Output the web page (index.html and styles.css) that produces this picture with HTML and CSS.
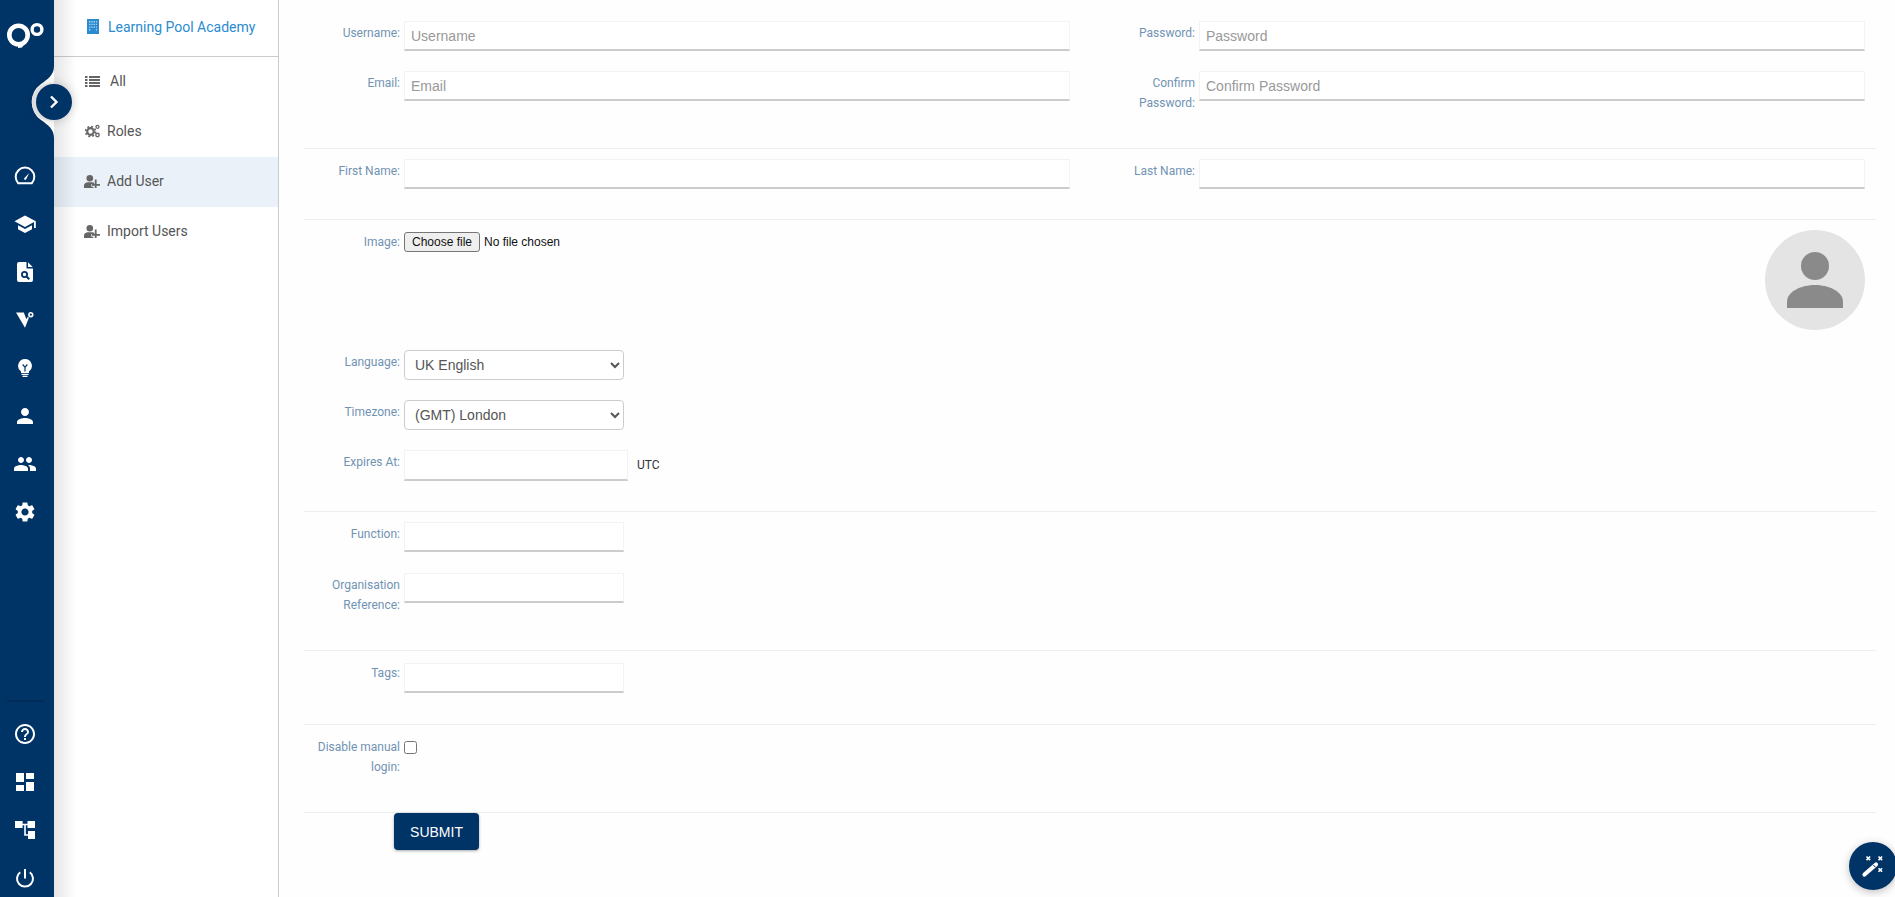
FILE: index.html
```html
<!DOCTYPE html>
<html lang="en">
<head>
<meta charset="utf-8">
<title>Add User</title>
<link rel="stylesheet" href="styles.css">
</head>
<body>
<div class="app">
  <aside class="rail">
    <div class="rail-logo">
      <svg class="logo" viewBox="0 0 38 27" width="38" height="27"><circle cx="11.500" cy="13" r="9.200" fill="none" stroke="#fff" stroke-width="4.600"/><path d="M11 22h6.500l-2.500 3.500c-1.200.3-2.500.5-4 .5z" fill="#fff"/><circle cx="30" cy="7.500" r="4.900" fill="#003366" stroke="#fff" stroke-width="3.400"/></svg>
    </div>
    <div class="rail-group">
      <a class="rail-btn"><svg viewBox="0 0 24 24" width="24" height="24"><path d="M5.200 19.200a9.300 9.300 0 1 1 13.600 0z" fill="none" stroke="#fff" stroke-width="2" stroke-linejoin="round"/><path d="M11.200 14.200l5-5.200-3 6.200a1.100 1.100 0 0 1-2-1z" fill="#fff"/></svg></a>
      <a class="rail-btn"><svg viewBox="0 0 24 24" width="24" height="24"><path d="M5 13.200v4L12 21l7-3.800v-4L12 17zM12 3.500L1.500 9.200 12 15l9-4.900V16h1.800V9.200z" fill="#fff"/></svg></a>
      <a class="rail-btn"><svg viewBox="0 0 24 24" width="24" height="24"><path d="M6 2h7.500v6.500H20V20a2 2 0 0 1-2 2H6a2 2 0 0 1-2-2V4a2 2 0 0 1 2-2zM15 2.300L19.700 7H15z" fill="#fff"/><circle cx="11.500" cy="14.500" r="2.600" fill="none" stroke="#003366" stroke-width="1.800"/><path d="M13.500 16.500l2.800 2.800" stroke="#003366" stroke-width="2"/></svg></a>
      <a class="rail-btn"><svg viewBox="0 0 17 15" width="18" height="16"><path d="M0 .5h7.400L9.800 6.800 11.300 4.300 12.200 5.300 8.500 14.800z" fill="#fff"/><circle cx="14" cy="2.500" r="1.800" fill="none" stroke="#fff" stroke-width="1.500"/></svg></a>
      <a class="rail-btn"><svg viewBox="0 0 14 18" width="14" height="18"><path d="M7 0a6.900 6.900 0 0 0-4 12.500V14h8v-1.500A6.900 6.900 0 0 0 7 0z" fill="#fff"/><path d="M4.700 5.500L7 8.300l2.300-2.800M7 8.300v4.200" fill="none" stroke="#003366" stroke-width="1.200"/><rect x="3.500" y="14.800" width="7" height="1.200" fill="#fff"/><rect x="4.500" y="16.700" width="5" height="1.300" fill="#fff"/></svg></a>
      <a class="rail-btn"><svg viewBox="0 0 24 24" width="24" height="24"><path d="M12 12c2.210 0 4-1.790 4-4s-1.790-4-4-4-4 1.790-4 4 1.790 4 4 4zm0 2c-2.670 0-8 1.340-8 4v2h16v-2c0-2.660-5.330-4-8-4z" fill="#fff"/></svg></a>
      <a class="rail-btn"><svg viewBox="0 0 24 24" width="24" height="24"><path d="M16 11c1.660 0 2.990-1.340 2.990-3S17.660 5 16 5c-1.660 0-3 1.340-3 3s1.340 3 3 3zm-8 0c1.660 0 2.990-1.340 2.990-3S9.660 5 8 5C6.340 5 5 6.340 5 8s1.340 3 3 3zm0 2c-2.330 0-7 1.170-7 3.500V19h14v-2.500c0-2.330-4.670-3.500-7-3.500zm8 0c-.29 0-.62.020-.97.050 1.160.840 1.970 1.970 1.970 3.450V19h6v-2.500c0-2.330-4.670-3.500-7-3.500z" fill="#fff"/></svg></a>
      <a class="rail-btn"><svg viewBox="0 0 24 24" width="24" height="24"><path d="M19.140 12.940c.04-.3.060-.61.060-.94 0-.32-.02-.64-.07-.94l2.030-1.580c.18-.14.23-.41.120-.61l-1.920-3.320c-.12-.22-.37-.29-.59-.22l-2.390.960c-.5-.38-1.030-.7-1.620-.94l-.36-2.540c-.04-.24-.24-.41-.48-.41h-3.840c-.24 0-.43.170-.47.410l-.36 2.540c-.59.240-1.130.570-1.620.940l-2.390-.96c-.22-.08-.47 0-.59.220L2.740 8.870c-.12.210-.08.470.120.610l2.030 1.580c-.05.3-.09.630-.09.940s.020.640.070.940l-2.030 1.580c-.18.140-.23.410-.12.610l1.920 3.320c.12.220.37.290.59.220l2.390-.96c.5.380 1.030.7 1.620.940l.36 2.540c.05.240.24.410.48.410h3.840c.24 0 .44-.17.470-.41l.36-2.540c.59-.24 1.130-.56 1.620-.94l2.390.960c.22.080.47 0 .59-.22l1.920-3.320c.12-.22.070-.47-.12-.61l-2.010-1.580zM12 15.600c-1.980 0-3.600-1.620-3.600-3.600s1.620-3.600 3.600-3.600 3.600 1.620 3.600 3.600-1.620 3.600-3.600 3.600z" fill="#fff"/></svg></a>
    </div>
    <div class="rail-sep"></div>
    <div class="rail-group">
      <a class="rail-btn"><svg viewBox="0 0 24 24" width="24" height="24"><path d="M11 18h2v-2h-2v2zm1-16C6.480 2 2 6.480 2 12s4.480 10 10 10 10-4.480 10-10S17.520 2 12 2zm0 18c-4.410 0-8-3.590-8-8s3.590-8 8-8 8 3.590 8 8-3.590 8-8 8zm0-14c-2.210 0-4 1.790-4 4h2c0-1.100.9-2 2-2s2 .9 2 2c0 2-3 1.750-3 5h2c0-2.250 3-2.500 3-5 0-2.210-1.790-4-4-4z" fill="#fff"/></svg></a>
      <a class="rail-btn"><svg viewBox="0 0 24 24" width="24" height="24"><path d="M3 12h8V3H3v9zm0 9h8v-6H3v6zm10 0h8v-9h-8v9zm0-18v6h8V3h-8z" fill="#fff"/></svg></a>
      <a class="rail-btn"><svg viewBox="0 0 24 24" width="24" height="24"><path d="M2 3h7.600v7H2zM14.500 3H22v7h-7.500zM15 13h7v8h-7z" fill="#fff"/><path d="M9 6.500h6M12 6.500V17h3.500" fill="none" stroke="#fff" stroke-width="1.600"/></svg></a>
      <a class="rail-btn"><svg viewBox="0 0 24 24" width="24" height="24"><path d="M12 3v9.500" stroke="#fff" stroke-width="2" fill="none"/><path d="M7.200 6.200a8 8 0 1 0 9.600 0" stroke="#fff" stroke-width="2" fill="none"/></svg></a>
    </div>
    <svg class="rail-notch" viewBox="0 0 30 72" width="30" height="72"><path d="M30 0C30 9 24 13 17 18A22 22 0 0 0 17 54C24 59 30 63 30 72Z" fill="#fff"/></svg>
    <button class="rail-toggle" type="button" aria-label="Expand">
      <svg viewBox="0 0 12 14" width="12" height="14"><path d="M3 1.500L8.500 7 3 12.500" fill="none" stroke="#fff" stroke-width="2.400"/></svg>
    </button>
  </aside>

  <nav class="subnav">
    <div class="subnav-head">
      <svg viewBox="0 0 12 15" width="12" height="15"><path d="M0 0h12v15H0z" fill="#2a8bd0"/><path d="M2 2h1.400v1.400H2zM4.300 2h1.400v1.400H4.300zM6.600 2H8v1.400H6.600zM8.900 2h1.100v1.400H8.900zM2 4.700h1.400v1.400H2zM4.300 4.700h1.400v1.400H4.300zM6.600 4.700H8v1.400H6.600zM8.900 4.700h1.100v1.400H8.900zM2 7.400h1.400v1.400H2zM4.300 7.400h1.400v1.400H4.300zM6.600 7.400H8v1.400H6.600zM8.900 7.400h1.100v1.400H8.900zM2 10.100h1.400v1.400H2zM8.900 10.100h1.100v1.400H8.900z" fill="#a9d3f0"/></svg>
      <span>Learning Pool Academy</span>
    </div>
    <a class="subnav-item">
      <svg class="icon-nudge" viewBox="0 0 15 11" width="15" height="11"><path d="M0 0h2.500v2H0zM4 0h11v2H4zM0 3h2.500v2H0zM4 3h11v2H4zM0 6h2.500v2H0zM4 6h11v2H4zM0 9h2.500v2H0zM4 9h11v2H4z" fill="#666"/></svg>
      <span class="item-wide">All</span>
    </a>
    <a class="subnav-item">
      <svg class="icon-nudge" viewBox="0 0 15 14" width="15" height="14"><circle cx="5.500" cy="7.500" r="3.300" fill="none" stroke="#666" stroke-width="2.200"/><circle cx="5.500" cy="7.500" r="5" fill="none" stroke="#666" stroke-width="1.600" stroke-dasharray="2 1.930"/><circle cx="12.500" cy="2.800" r="1.500" fill="none" stroke="#666" stroke-width="1.300"/><circle cx="12.500" cy="11" r="1.700" fill="none" stroke="#666" stroke-width="1.400"/></svg>
      <span>Roles</span>
    </a>
    <a class="subnav-item is-active">
      <svg viewBox="0 0 16 13" width="16" height="13"><circle cx="5.800" cy="3.300" r="3.300" fill="#666"/><path d="M0 13v-2.600C0 8.500 1.800 7.200 3.800 7.200h4.400c1 0 1.700.3 2 .6V9H7.400v2.800h2V13z" fill="#666"/><path d="M10.800 4.500h1.800V9H16v1.800h-3.400V13h-1.800v-2.200H8V9h2.800z" fill="#666"/></svg>
      <span>Add User</span>
    </a>
    <a class="subnav-item">
      <svg viewBox="0 0 16 13" width="16" height="13"><circle cx="5.800" cy="3.300" r="3.300" fill="#666"/><path d="M0 13v-2.600C0 8.500 1.800 7.200 3.800 7.200h4.400c1 0 1.700.3 2 .6V9H7.400v2.800h2V13z" fill="#666"/><path d="M10.800 4.500h1.800V9H16v1.800h-3.400V13h-1.800v-2.200H8V9h2.800z" fill="#666"/></svg>
      <span>Import Users</span>
    </a>
  </nav>

  <main class="main">
    <form class="form">
      <section class="sec sec-account">
        <div class="two">
          <div class="field"><label class="lbl">Username:</label><input class="inp" type="text" placeholder="Username"></div>
          <div class="field"><label class="lbl">Password:</label><input class="inp" type="password" placeholder="Password"></div>
          <div class="field"><label class="lbl">Email:</label><input class="inp" type="text" placeholder="Email"></div>
          <div class="field"><label class="lbl">Confirm Password:</label><input class="inp" type="password" placeholder="Confirm Password"></div>
        </div>
      </section>
      <section class="sec sec-name">
        <div class="two">
          <div class="field"><label class="lbl">First Name:</label><input class="inp" type="text"></div>
          <div class="field"><label class="lbl">Last Name:</label><input class="inp" type="text"></div>
        </div>
      </section>
      <section class="sec sec-prefs">
        <div class="field field-image">
          <label class="lbl">Image:</label>
          <div class="file">
            <button class="file-btn" type="button">Choose file</button>
            <span class="file-name">No file chosen</span>
          </div>
          <div class="avatar">
            <svg viewBox="0 0 100 100" width="100" height="100"><circle cx="50" cy="36" r="14" fill="#8a8a8a"/><path d="M22 78v-6c0-11 15-17 28-17s28 6 28 17v6z" fill="#8a8a8a"/></svg>
          </div>
        </div>
        <div class="field"><label class="lbl">Language:</label>
          <select class="sel"><option>UK English</option></select>
        </div>
        <div class="field"><label class="lbl">Timezone:</label>
          <select class="sel"><option>(GMT) London</option></select>
        </div>
        <div class="field"><label class="lbl">Expires At:</label>
          <input class="inp inp-date" type="text"><span class="utc">UTC</span>
        </div>
      </section>
      <section class="sec sec-org">
        <div class="field"><label class="lbl">Function:</label><input class="inp inp-short" type="text"></div>
        <div class="field"><label class="lbl">Organisation Reference:</label><input class="inp inp-short" type="text"></div>
      </section>
      <section class="sec sec-tags">
        <div class="field"><label class="lbl">Tags:</label><input class="inp inp-short inp-tags" type="text"></div>
      </section>
      <section class="sec sec-login">
        <div class="field"><label class="lbl">Disable manual login:</label><input class="chk" type="checkbox"></div>
      </section>
      <button class="submit" type="button">SUBMIT</button>
    </form>
  </main>
</div>
<button class="fab" type="button" aria-label="Magic">
  <svg viewBox="0 0 24 24" width="24" height="24"><path d="M3.500 20.500L15 10.500" fill="none" stroke="#fff" stroke-width="4.200" stroke-linecap="round"/><path d="M12.200 10.800l2.400 2.600" stroke="#003366" stroke-width="1"/><path d="M5.500 2.500l3.600 3.600m0-3.600L5.500 6.100M17.500 2.500l3.600 3.600m0-3.600l-3.600 3.600M17.500 14.200l3.600 3.600m0-3.600l-3.600 3.600" stroke="#fff" stroke-width="1.600"/></svg>
</button>
</body>
</html>
```
FILE: styles.css
```css
* { box-sizing: border-box; }
html, body { margin: 0; height: 100%; overflow: hidden; background: #fefefe; }
body { font-family: Roboto, "Liberation Sans", sans-serif; }
.app { display: flex; height: 897px; }

.rail { position: relative; z-index: 3; flex: 0 0 54px; width: 54px; height: 897px; background: #003366; display: flex; flex-direction: column; }
.rail-logo { height: 152px; flex: none; padding: 22px 0 0 7px; }
.logo { display: block; }
.rail-group { flex: none; }
.rail-btn { display: flex; align-items: center; justify-content: center; height: 48px; width: 50px; }
.rail-sep { flex: none; height: 2px; width: 37px; margin: 164px 0 8px 7px; background: #002a57; }
.rail-notch { position: absolute; left: 24px; top: 66px; }
.rail-toggle { position: absolute; left: 36px; top: 84px; width: 36px; height: 36px; padding: 0; border: 0; border-radius: 50%; background: #003366; display: flex; align-items: center; justify-content: center; box-shadow: -3px 0 0 1px #dedede, 0 0 9px 2px rgba(0,0,0,.14); }

.subnav { position: relative; z-index: 1; flex: 0 0 225px; width: 225px; height: 897px; background: #fff; border-right: 1px solid #ccc; color: #555; font-size: 14px; }
.subnav::before { content: ""; position: absolute; left: 0; top: 0; bottom: 0; width: 22px; background: linear-gradient(to right, rgba(0,0,0,.1), rgba(0,0,0,0)); pointer-events: none; z-index: 2; }
.subnav-head { height: 57px; padding: 0 0 3px 33px; border-bottom: 1px solid #ccc; display: flex; align-items: center; gap: 9px; color: #2a8bd0; }
.subnav-item { height: 50px; padding: 0 0 2px 30px; display: flex; align-items: center; gap: 7px; color: #555; }
.subnav-item svg { flex: none; }
.subnav-item .icon-nudge { margin-left: 1px; }
.item-wide { margin-left: 3px; }
.is-active { background: #eaf1f9; }

.main { flex: 1; min-width: 0; height: 897px; padding: 0 19px 0 25px; }
.sec { border-bottom: 1px solid #eee; padding-top: 10px; }
.sec-account { padding-top: 21px; padding-bottom: 35px; height: 149px; }
.sec-name { height: 71px; }
.sec-prefs { height: 292px; display: flex; flex-direction: column; gap: 20px; }
.sec-org { height: 139px; display: flex; flex-direction: column; gap: 21px; }
.sec-tags { height: 74px; }
.sec-login { height: 88px; }

.two { display: grid; grid-template-columns: 766px 766px; column-gap: 29px; row-gap: 20px; }
.field { display: flex; align-items: flex-start; }
.lbl { flex: 0 0 96px; width: 96px; margin-right: 4px; padding-top: 2px; text-align: right; font-size: 12px; line-height: 20px; color: #7193b3; }
.inp { flex: 1; min-width: 0; height: 30px; padding: 0 6px; background: #fff; border: 1px solid #f3f3f3; border-bottom: 2px solid #ccc; border-radius: 0; font: 14px "Liberation Sans", Arial, sans-serif; color: #555; outline: none; }
.inp::placeholder { color: #999; opacity: 1; }
.inp-short { flex: 0 0 220px; width: 220px; }
.inp-date { flex: 0 0 224px; width: 224px; height: 31px; }
.inp-tags { margin-top: 2px; }
.utc { margin: 5px 0 0 9px; font-size: 12px; line-height: 20px; color: #333; }

.field-image { height: 100px; }
.file { margin-top: 2px; display: flex; align-items: center; gap: 4px; font: 12px "Liberation Sans", Arial, sans-serif; color: #111; }
.file-btn { width: 76px; height: 20px; padding: 0; border: 1px solid #767676; border-radius: 3px; background: #efefef; font: 12px "Liberation Sans", Arial, sans-serif; color: #111; }
.avatar { margin-left: auto; margin-right: 11px; width: 100px; height: 100px; border-radius: 50%; background: #e4e4e4; }
.avatar svg { display: block; }

.sel { flex: 0 0 220px; width: 220px; height: 30px; padding: 0 6px; background: #fff; border: 1px solid #ccc; border-radius: 4px; font: 14px "Liberation Sans", Arial, sans-serif; color: #555; }
.chk { width: 13px; height: 13px; margin: 6px 0 0; }

.submit { display: block; width: 85px; height: 37px; margin: 0 0 0 90px; border: 0; border-radius: 4px; background: #003366; color: #fff; font: 14px "Liberation Sans", Arial, sans-serif; box-shadow: 0 1px 3px rgba(0,0,0,.35); }

.fab { position: fixed; left: 1849px; top: 842px; width: 48px; height: 48px; padding: 0; border: 0; border-radius: 50%; background: #003366; display: flex; align-items: center; justify-content: center; box-shadow: 0 2px 8px rgba(0,0,0,.25); }
```
